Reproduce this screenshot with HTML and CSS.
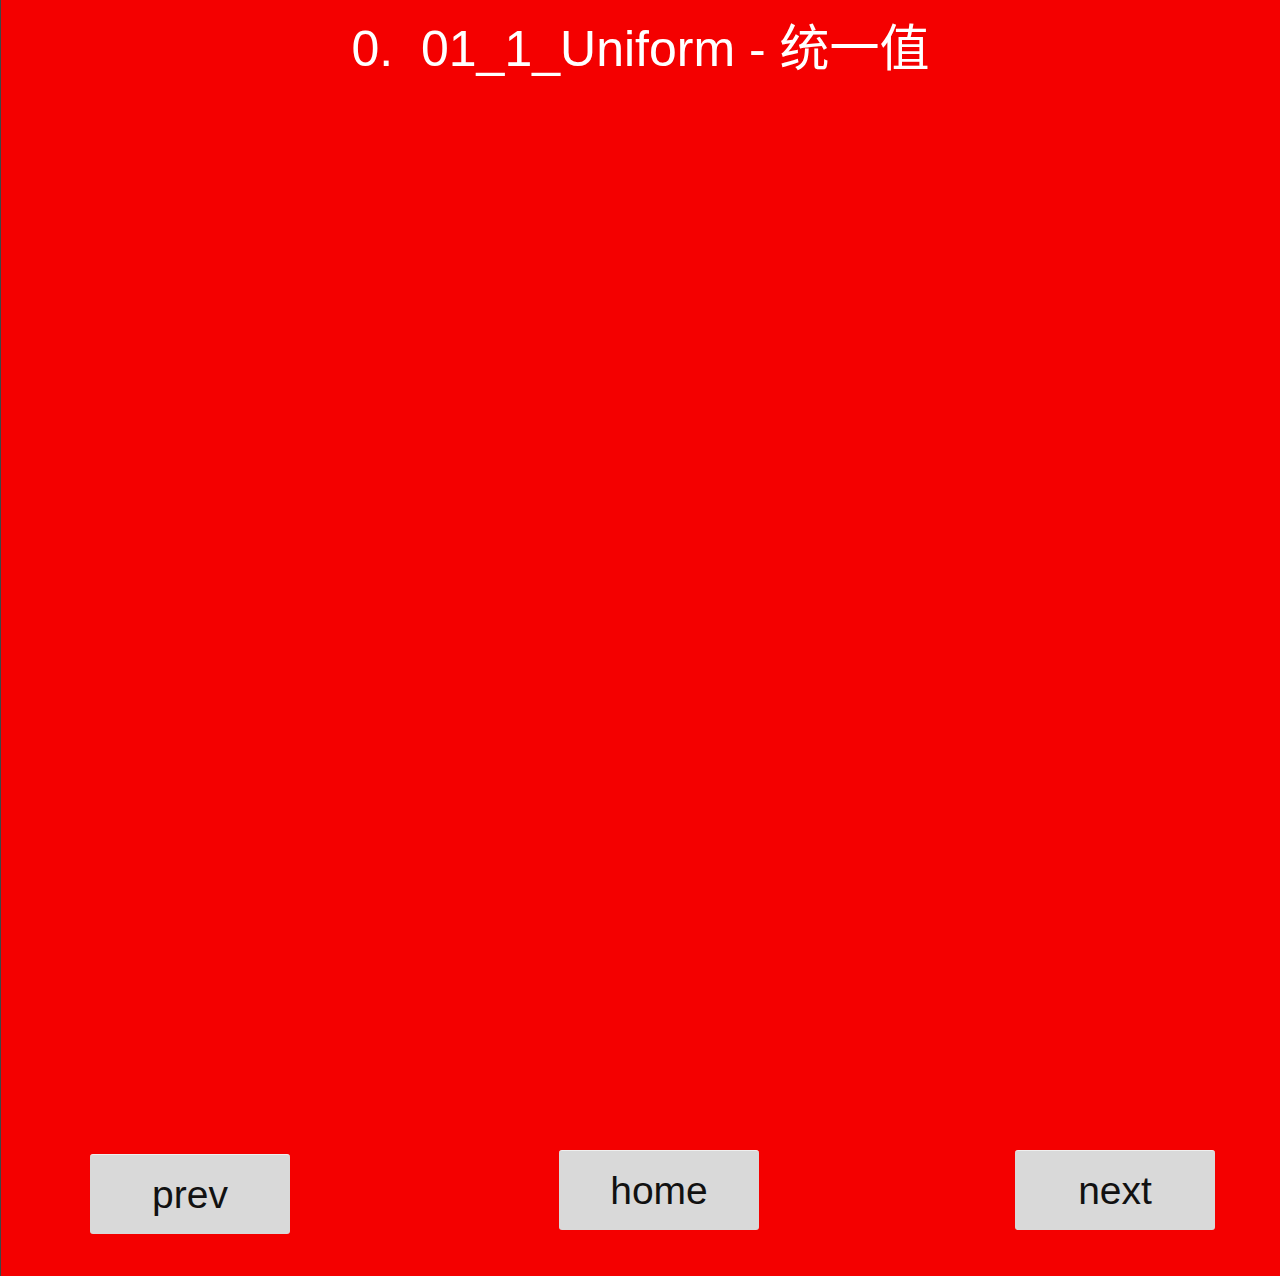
FILE: index.html
```html
<!DOCTYPE html>
<html lang="zh">
<head>
<meta charset="utf-8">
<title>01_1_Uniform</title>
<link rel="stylesheet" href="styles.css">
</head>
<body>
<div class="page">
  <h1 class="title">0.&nbsp; 01_1_Uniform - 统一值</h1>
  <div class="canvas"></div>
  <div class="nav">
    <button class="btn btn-prev">prev</button>
    <button class="btn btn-home">home</button>
    <button class="btn btn-next">next</button>
  </div>
</div>
</body>
</html>
```

FILE: styles.css
```css
html, body {
  margin: 0;
  padding: 0;
}
body {
  background: #f40000;
  font-family: "Liberation Sans", Arial, "Noto Sans CJK SC", sans-serif;
}
.page {
  height: 1276px;
  box-sizing: border-box;
  border-left: 1px solid #3a4848;
  display: flex;
  flex-direction: column;
}
.title {
  margin: 0;
  padding-top: 20px;
  font-size: 50px;
  line-height: 58px;
  font-weight: normal;
  color: #ffffff;
  text-align: center;
  white-space: nowrap;
}
.canvas {
  flex: 1;
}
.nav {
  display: flex;
  align-items: flex-start;
  padding-left: 89px;
  padding-bottom: 42px;
}
.btn {
  width: 200px;
  height: 80px;
  padding: 0;
  border: none;
  border-top: 1px solid #efefef;
  border-radius: 3px;
  background: #d9d9d9;
  color: #111111;
  font-family: "Liberation Sans", Arial, sans-serif;
  font-size: 39px;
  line-height: 78px;
  text-align: center;
}
.btn-prev {
  margin-top: 4px;
}
.btn-home {
  margin-left: 269px;
}
.btn-next {
  margin-left: 256px;
}
```
